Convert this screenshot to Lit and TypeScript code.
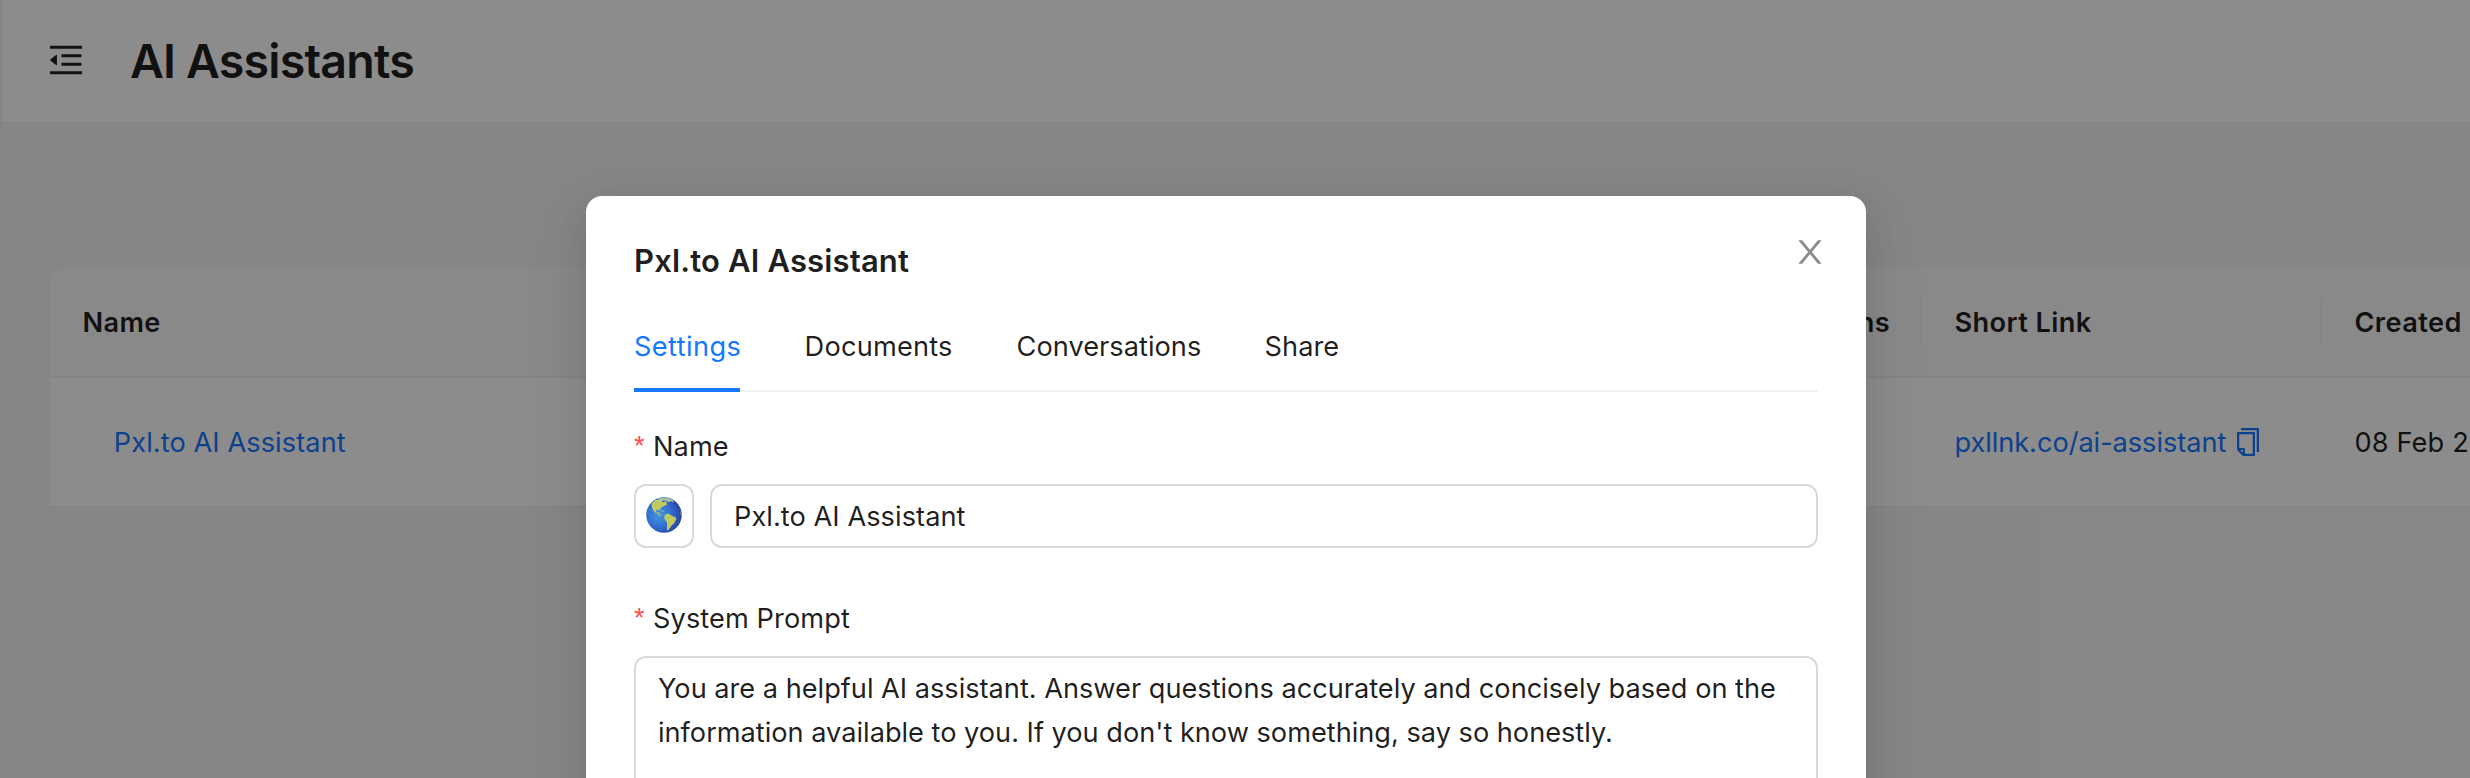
import { LitElement, html, css, svg } from "lit";
import { customElement, property, state } from "lit/decorators.js";
import { classMap } from "lit/directives/class-map.js";

const paths = {
  fold: "M408 442h480c4.4 0 8-3.6 8-8v-56c0-4.4-3.6-8-8-8H408c-4.4 0-8 3.6-8 8v56c0 4.4 3.6 8 8 8zm-8 204c0 4.4 3.6 8 8 8h480c4.4 0 8-3.6 8-8v-56c0-4.4-3.6-8-8-8H408c-4.4 0-8 3.6-8 8v56zm504-486H120c-4.4 0-8 3.6-8 8v56c0 4.4 3.6 8 8 8h784c4.4 0 8-3.6 8-8v-56c0-4.4-3.6-8-8-8zm0 632H120c-4.4 0-8 3.6-8 8v56c0 4.4 3.6 8 8 8h784c4.4 0 8-3.6 8-8v-56c0-4.4-3.6-8-8-8zM115.4 518.9L271.7 642c5.8 4.6 14.4.5 14.4-6.9V388.9c0-7.4-8.5-11.5-14.4-6.9L115.4 505.1a8.74 8.74 0 000 13.8z",
  copy: "M832 64H296c-4.4 0-8 3.6-8 8v56c0 4.4 3.6 8 8 8h496v688c0 4.4 3.6 8 8 8h56c4.4 0 8-3.6 8-8V96c0-17.7-14.3-32-32-32zM704 192H192c-17.7 0-32 14.3-32 32v530.7c0 8.5 3.4 16.6 9.4 22.6l173.3 173.3c2.2 2.2 4.7 4 7.4 5.5v1.9h4.2c3.5 1.3 7.2 2 11 2H704c17.7 0 32-14.3 32-32V224c0-17.7-14.3-32-32-32zM350 856.2L263.9 770H350v86.2zM664 888H414V746c0-22.1-17.9-40-40-40H232V264h432v624z",
  close: "M563.8 512l262.5-312.9c4.4-5.2.7-13.1-6.1-13.1h-79.8c-4.7 0-9.2 2.1-12.3 5.7L511.6 449.8 295.1 191.7c-3-3.6-7.5-5.7-12.3-5.7H203c-6.8 0-10.5 7.9-6.1 13.1L459.4 512 196.9 824.9A7.95 7.95 0 00203 838h79.8c4.7 0 9.2-2.1 12.3-5.7l216.5-258.1 216.5 258.1c3 3.6 7.5 5.7 12.3 5.7h79.8c6.8 0 10.5-7.9 6.1-13.1L563.8 512z",
};

@customElement("ui-icon")
class UiIcon extends LitElement {
  @property() name: keyof typeof paths = "close";
  static styles = css`
    :host { display: block; width: 1em; height: 1em; flex: none; }
    .svg { display: block; width: 100%; height: 100%; fill: currentColor; }
  `;
  render() {
    return html`<svg class="svg" viewBox="64 64 896 896">${svg`<path d=${paths[this.name]}></path>`}</svg>`;
  }
}

@customElement("globe-icon")
class GlobeIcon extends LitElement {
  static styles = css`
    :host { display: block; width: 36px; height: 36px; }
    .svg { display: block; }
  `;
  render() {
    return html`
      <svg class="svg" width="36" height="36" viewBox="0 0 36 36">
        <defs>
          <radialGradient id="sea" cx="0.36" cy="0.5" r="0.66">
            <stop offset="0" stop-color="#4796dc"></stop>
            <stop offset="0.45" stop-color="#3474d2"></stop>
            <stop offset="0.8" stop-color="#2b52b8"></stop>
            <stop offset="1" stop-color="#2a3a86"></stop>
          </radialGradient>
          <linearGradient id="land" x1="0" y1="0" x2="1" y2="1">
            <stop offset="0" stop-color="#b4cf6c"></stop>
            <stop offset="1" stop-color="#d3c250"></stop>
          </linearGradient>
          <clipPath id="disc"><circle cx="18" cy="18" r="17.8"></circle></clipPath>
        </defs>
        <circle cx="18" cy="18" r="17.8" fill="url(#sea)"></circle>
        <g clip-path="url(#disc)">
          <path fill="#a9bda0" d="M12 1.6l4-1.2 5 .2 4.600 1.600 2.400 2.200-1.400.8-1.800-1.200-2.200 1.600-2-1.600-3-.6-2 .8-3.200-.6z"></path>
          <path fill="url(#land)" d="M5.600 6.400L9 3.200l4.400-.8 3 .6-.6 1.800 2 .4 1.600-1.200 1.200 1.600.4 2.200-2 .6-1.600 1.200-1.400.4-1.600 1.800-.8 1.800-1.600-.8-2 .6-.2 1.800 1.600.4 1.200-.8.200 1.600 1.200 1.200 1.600.2-.2.800-2-.4-2.200-2-2.600-1-1.600-2.400-1-2.600z"></path>
          <path fill="#b9d38a" d="M14.400 13.200l2.400.4 1.400 1-1.800-.2z"></path>
          <path fill="url(#land)" d="M18.600 18l2.400-1.200 2.800.4 2.200 1.800 3.400 1.200 1 2-1.400 2-1 2.400-2.200 1.400-1.200 2-1.800 2.600-1.200.8-.8-.8.400-4-.2-3.200-2-2.400-.8-2.600z"></path>
          <path fill="#9aa86a" d="M35 12.500l1.500 1v7l-1.200-1-.9-3.500z"></path>
        </g>
      </svg>
    `;
  }
}

@customElement("assistant-table")
class AssistantTable extends LitElement {
  static styles = css`
    :host { display: block; width: 2672px; }
    .row { display: grid; grid-template-columns: 1610px 262px 400px 400px; border-bottom: 2px solid #f0f0f0; line-height: 44px; white-space: nowrap; }
    .head { height: 108px; background: #fafafa; border-top-left-radius: 16px; font-weight: 600; }
    .body { height: 128px; background: #fff; }
    .cell { display: flex; align-items: center; padding: 2px 0 0 32.4px; }
    .head .cell { background: linear-gradient(#f0f0f0, #f0f0f0) right center / 2px 44px no-repeat; letter-spacing: 0.4px; }
    .head .end { justify-content: flex-end; padding: 2px 32px 0 0; }
    .link { color: #1677ff; }
    .name { padding-left: 31.4px; letter-spacing: 0.075px; }
    .short { letter-spacing: -0.05px; }
    .copy { color: #1677ff; font-size: 28px; margin: -2px 0 0 7.6px; }
    .date { letter-spacing: 0.15px; }
  `;
  render() {
    return html`
      <div class="row head">
        <div class="cell">Name</div>
        <div class="cell end">Conversations</div>
        <div class="cell">Short Link</div>
        <div class="cell">Created</div>
      </div>
      <div class="row body">
        <div class="cell"><span class="link name">Pxl.to AI Assistant</span></div>
        <div class="cell"></div>
        <div class="cell"><span class="link short">pxllnk.co/ai-assistant</span><ui-icon class="copy" name="copy"></ui-icon></div>
        <div class="cell"><span class="date">08 Feb 2024</span></div>
      </div>
    `;
  }
}

@customElement("assistant-dialog")
class AssistantDialog extends LitElement {
  @state() private active = "Settings";
  private tabs = [
    { name: "Settings", width: 106 },
    { name: "Documents", width: 148 },
    { name: "Conversations", width: 184 },
    { name: "Share", width: 75 },
  ];
  static styles = css`
    :host { display: block; box-sizing: border-box; width: 1280px; height: 1200px; padding: 40px 48px; border-radius: 16px; background: #fff; line-height: 44px;
      box-shadow: 0 12px 32px rgba(0,0,0,.08), 0 6px 12px -8px rgba(0,0,0,.12), 0 18px 56px 16px rgba(0,0,0,.05); }
    .top { display: flex; justify-content: space-between; margin-bottom: 14px; }
    .title { font-size: 31px; font-weight: 600; line-height: 50px; letter-spacing: 0.15px; }
    .close { font-size: 32px; color: rgba(0,0,0,.45); margin-right: -8px; }
    .tabs { display: flex; gap: 64px; height: 92px; box-shadow: inset 0 -2px #f0f0f0; margin-bottom: 32px; }
    .tab { box-sizing: border-box; padding: 25px 0 0 0.6px; white-space: nowrap; letter-spacing: 0.02px; }
    .tab.on { padding-left: 0; color: #1677ff; box-shadow: inset 0 -4px #1677ff; letter-spacing: 0.4px; }
    .tab.wide { letter-spacing: 0.2px; }
    .label { display: flex; padding: 1px 0 15px; letter-spacing: 0.08px; }
    .star { width: 19px; color: #ff4d4f; font-family: "Liberation Sans", sans-serif; font-size: 27px; line-height: 42px; }
    .line { display: flex; gap: 16px; margin-bottom: 48px; }
    .box { box-sizing: border-box; height: 64px; border: 2px solid #d9d9d9; border-radius: 12px; }
    .emoji { width: 60px; display: flex; align-items: center; justify-content: center; padding-bottom: 2px; }
    .input { flex: 1; padding: 9px 22px 7px; letter-spacing: 0.05px; }
    .area { height: 400px; padding: 9px 22px; white-space: pre; letter-spacing: -0.015px; }
  `;
  render() {
    return html`
      <div class="top"><div class="title">Pxl.to AI Assistant</div><ui-icon class="close" name="close"></ui-icon></div>
      <div class="tabs">
        ${this.tabs.map((t) => html`
          <div class=${classMap({ tab: true, on: t.name === this.active, wide: t.name === "Documents" })}
            style="width:${t.width}px" @click=${() => (this.active = t.name)}>${t.name}</div>`)}
      </div>
      <div class="label"><span class="star">*</span>Name</div>
      <div class="line">
        <div class="box emoji"><globe-icon></globe-icon></div>
        <div class="box input">Pxl.to AI Assistant</div>
      </div>
      <div class="label"><span class="star">*</span>System Prompt</div>
      <div class="box area">You are a helpful AI assistant. Answer questions accurately and concisely based on the
information available to you. If you don't know something, say so honestly.</div>
    `;
  }
}

@customElement("app-root")
class AppRoot extends LitElement {
  static styles = css`
    :host { display: block; position: relative; width: 100%; height: 778px; overflow: hidden;
      background: #f5f5f5; color: rgba(0,0,0,.88); font: 400 27.2px/44px Inter, sans-serif; }
    .page { box-sizing: border-box; height: 778px; border-left: 2px solid #f0f0f0; }
    .header { display: flex; align-items: center; height: 122px; padding-left: 46px; background: #fff; border-bottom: 2px solid #f0f0f0; }
    .fold { font-size: 36px; margin: -2px 46px 0 0; }
    .heading { margin: 0; font-size: 46.6px; font-weight: 600; letter-spacing: -0.82px; line-height: 60px; }
    .content { padding: 144px 0 0 48px; }
    .mask { position: absolute; inset: 0; display: flex; justify-content: center; align-items: flex-start; padding: 196px 18px 0 0; background: rgba(0,0,0,.45); }
  `;
  render() {
    return html`
      <div class="page">
        <div class="header"><ui-icon class="fold" name="fold"></ui-icon><h1 class="heading">AI Assistants</h1></div>
        <div class="content"><assistant-table></assistant-table></div>
      </div>
      <div class="mask"><assistant-dialog></assistant-dialog></div>
    `;
  }
}
